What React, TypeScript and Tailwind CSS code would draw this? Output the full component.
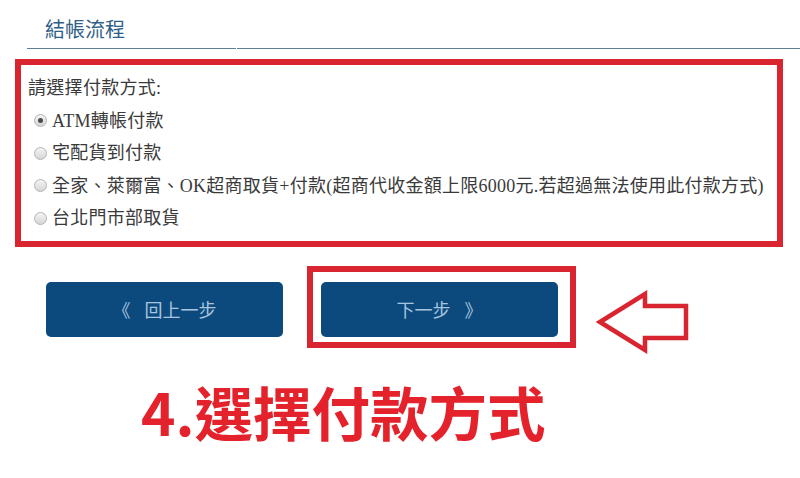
const options = [
  { label: 'ATM轉帳付款', checked: true },
  { label: '宅配貨到付款', checked: false },
  { label: '全家、萊爾富、OK超商取貨+付款(超商代收金額上限6000元.若超過無法使用此付款方式)', checked: false },
  { label: '台北門市部取貨', checked: false },
];

const Radio = ({ checked }: { checked: boolean }) => (
  <span className="flex h-[13px] w-[13px] shrink-0 items-center justify-center rounded-full border border-[#b4b4b4] bg-gradient-to-b from-[#f4f4f4] to-[#d6d6d6]">
    {checked && <span className="h-[5px] w-[5px] rounded-full bg-[#4a4a4a]" />}
  </span>
);

export default function App() {
  return (
    <div className="relative h-[478px] w-[800px] overflow-hidden bg-white">
      {/* Header */}
      <div className="pl-[45px] pt-[14px] text-[20px] leading-[30px] text-[#2f5e86] [font-family:'Noto_Sans_CJK_TC',sans-serif]">
        結帳流程
      </div>
      <div className="ml-[27px] mt-[4px] flex gap-[1px]">
        <div className="h-px w-[209px] bg-[#5f7f94]" />
        <div className="h-px flex-1 bg-[#5f7f94]" />
      </div>

      {/* Payment options box */}
      <div className="ml-[15px] mt-[10px] h-[188px] w-[768px] border-[6px] border-[#d8252f] pl-[7px] pt-[7px] text-[18px] leading-[32.5px] text-[#3a3a3a] [font-family:'Liberation_Serif','Noto_Sans_CJK_TC',serif]">
        <div className="tracking-[0.3px]">請選擇付款方式:</div>
        {options.map((o) => (
          <div key={o.label} className="flex items-center gap-[5px] pl-[6px] whitespace-nowrap">
            <Radio checked={o.checked} />
            <span className="tracking-[0.25px]">{o.label}</span>
          </div>
        ))}
      </div>

      {/* Buttons */}
      <div className="mt-[19px] flex items-start pl-[46px]">
        <button className="mt-[16px] flex h-[55px] w-[237px] items-center justify-center gap-[14px] rounded-[5px] bg-[#0c4a7e] text-[18px] text-[#a9c4de] [font-family:'Noto_Sans_CJK_TC',sans-serif]">
          <span>《</span>
          <span>回上一步</span>
        </button>
        <div className="ml-[24px] border-[6px] border-[#d8252f] pb-[5px] pl-[8px] pr-[12px] pt-[10px]">
          <button className="flex h-[55px] w-[237px] items-center justify-center gap-[14px] rounded-[5px] bg-[#0c4a7e] text-[18px] text-[#a9c4de] [font-family:'Noto_Sans_CJK_TC',sans-serif]">
            <span>下一步</span>
            <span>》</span>
          </button>
        </div>
        <svg width="96" height="64" viewBox="0 0 96 64" className="ml-[20px] mt-[24px]">
          <path
            d="M4 32 L49 4 L49 16 L90 16 L90 48 L49 48 L49 60 Z"
            fill="none"
            stroke="#d8252f"
            strokeWidth="4.5"
            strokeLinejoin="miter"
          />
        </svg>
      </div>

      {/* Caption */}
      <div className="mt-[28px] pl-[141px] text-[58.5px] font-bold leading-none text-[#e3222b] [font-family:'Noto_Sans_CJK_TC',sans-serif]">
        4.選擇付款方式
      </div>
    </div>
  );
}
